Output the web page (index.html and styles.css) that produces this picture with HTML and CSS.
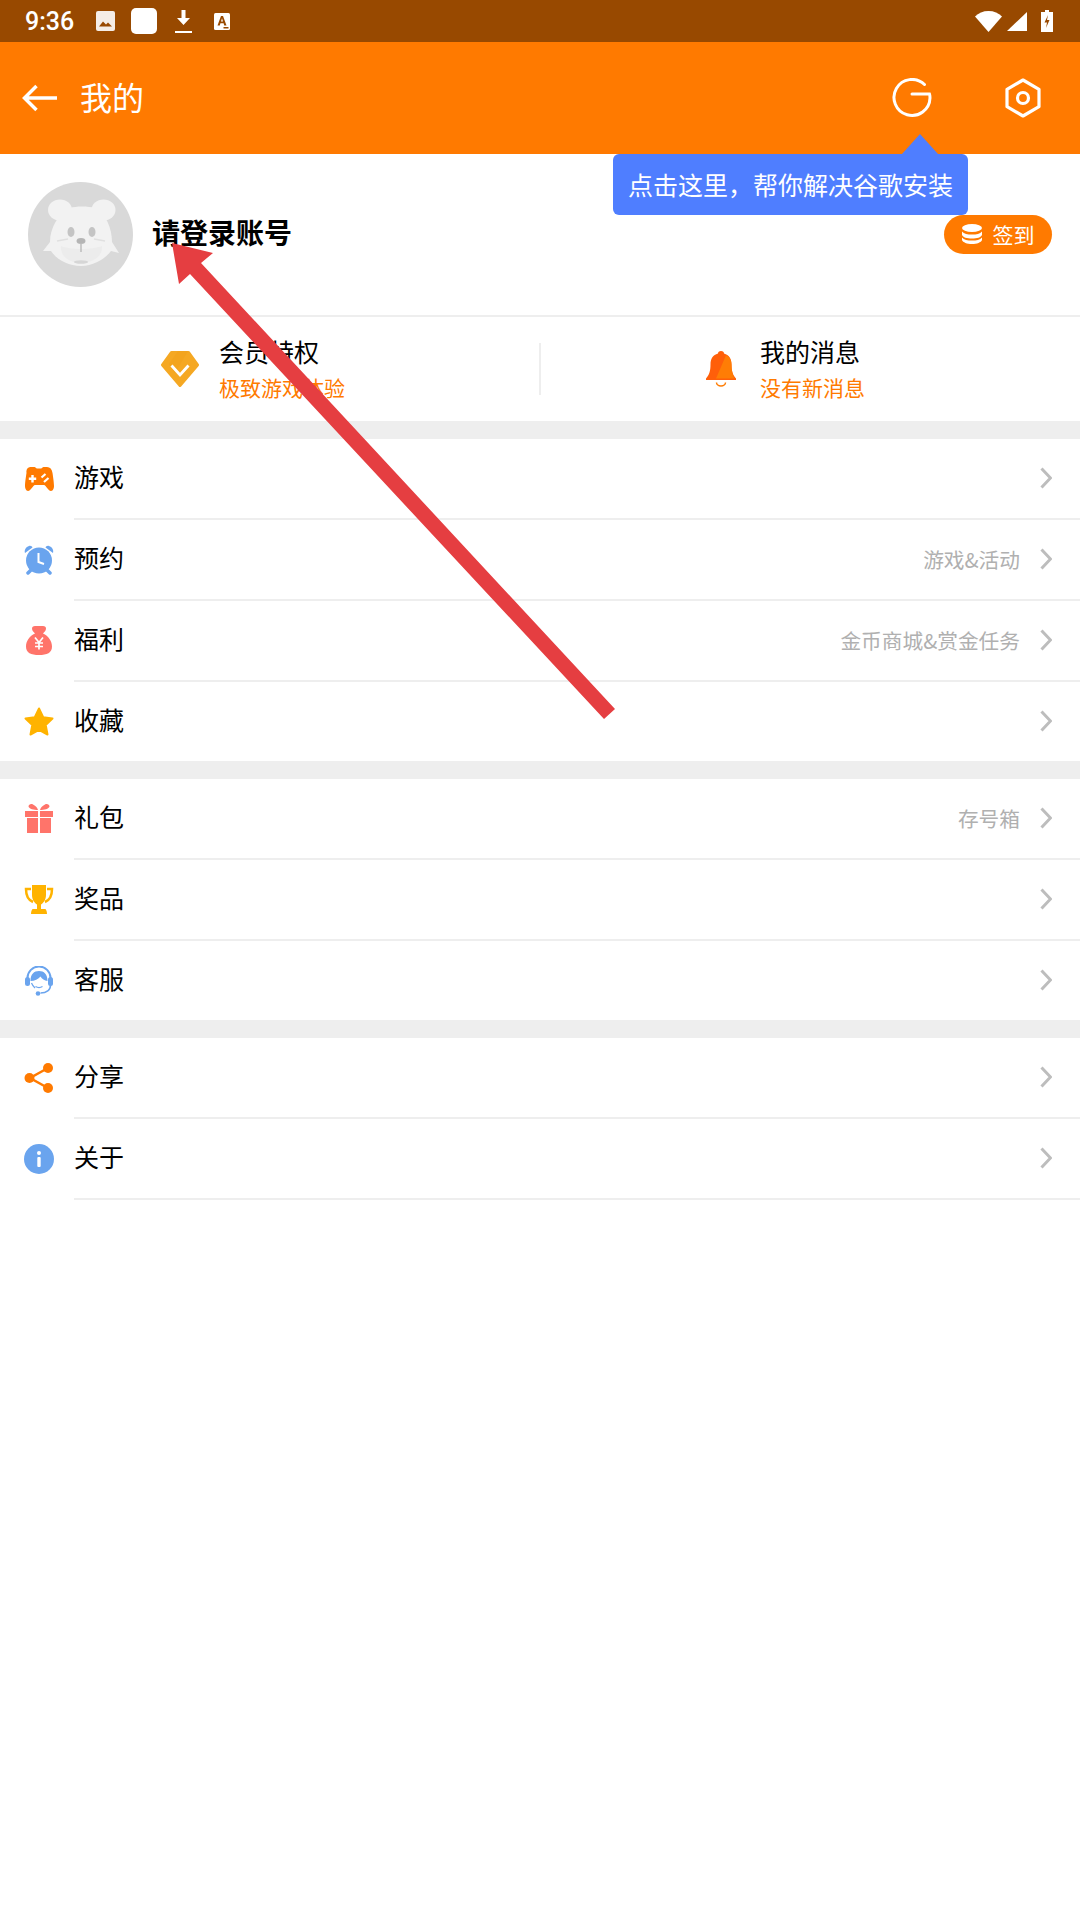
FILE: index.html

```html
<!DOCTYPE html>
<html lang="zh-CN">
<head>
  <meta charset="UTF-8" />
  <meta name="viewport" content="width=device-width, initial-scale=1.0" />
  <title>我的</title>
  <link rel="stylesheet" href="styles.css">
</head>
<body>
  <div class="status-bar">
    <span class="clock">9:36</span>
    <svg class="st-pic" width="19" height="20" viewBox="0 0 19 20"><rect width="19" height="20" rx="2" fill="#fff" opacity=".9"/><path d="M3 15.500l4-5 3 3 2-2 4 4z" fill="#984900"/></svg>
    <span class="st-app"></span>
    <svg class="st-down" width="17" height="23" viewBox="0 0 17 23"><path d="M6.500 0h4v8h4.500l-6.500 7-6.500-7h4.500z" fill="#fff"/><rect y="21" width="17" height="2" fill="#fff"/></svg>
    <svg class="st-a" width="16" height="17" viewBox="0 0 16 17"><rect width="16" height="17" rx="1.500" fill="#fff"/><path d="M3.500 12.500L7 3h2l3.500 9.500h-2.300l-.6-2.200H6.400l-.6 2.200zM7 8.600h2L8 5.300z" fill="#984900"/><rect x="9.500" y="14" width="5" height="1.500" fill="#984900"/></svg>
    <span class="st-space"></span>
    <svg class="st-wifi" width="27" height="21" viewBox="0 0 27 21"><path d="M0 5.500C3.500 2 8 0 13.500 0S23.500 2 27 5.500L13.500 21z" fill="#fff"/></svg>
    <svg class="st-signal" width="20" height="19" viewBox="0 0 20 19"><path d="M20 0v19H0z" fill="#fff"/></svg>
    <svg class="st-batt" width="12" height="22" viewBox="0 0 12 22"><path d="M4 0h4v2h4v20H0V2h4z" fill="#fff"/><path d="M7 5L3.500 12.500h2.500L5 18l3.500-8H6z" fill="#984900"/></svg>
  </div>

  <header class="app-bar">
    <svg class="back" width="35" height="28" viewBox="0 0 35 28"><path d="M14.500 2L2.500 14l12 12M2.500 14h32.500" fill="none" stroke="#fff" stroke-width="3.500"/></svg>
    <span class="app-title">我的</span>
    <svg class="icon-g" width="40" height="40" viewBox="0 0 40 40"><path d="M32.500 6.500A18 18 0 1 0 38 20c0-1.500 0-2.800-.5-4H20" fill="none" stroke="#fff" stroke-width="3" stroke-linecap="round"/></svg>
    <svg class="icon-hex" width="36" height="40" viewBox="0 0 36 40"><path d="M18 2l16 9.300v17.400L18 38 2 28.700V11.300z" fill="none" stroke="#fff" stroke-width="3.200" stroke-linejoin="round"/><circle cx="18" cy="20" r="5.500" fill="none" stroke="#fff" stroke-width="3.200"/></svg>
  </header>

  <section class="profile">
    <svg class="avatar" width="105" height="105" viewBox="0 0 105 105">
      <circle cx="52.500" cy="52.500" r="52.500" fill="#d9d9d9"/>
      <ellipse cx="32" cy="28" rx="12" ry="10.500" fill="#f2f2f2"/>
      <ellipse cx="75.500" cy="28" rx="12" ry="10.500" fill="#f2f2f2"/>
      <path d="M42 26c6-2 18-2 25 0 11 6 17 20 17 34l7 11-8-2c-5 7-17 15-30 15s-25-7-30-15l-8 0 7-9c0-14 8-28 20-34z" fill="#f2f2f2"/>
      <path d="M33 64c9 4 31 4 41 0 1 10-9 17-21 17S32 74 33 64z" fill="#ececec"/>
      <ellipse cx="43" cy="50" rx="3.500" ry="5" fill="#c4c4c4"/>
      <ellipse cx="64" cy="50" rx="3.500" ry="5" fill="#c4c4c4"/>
      <path d="M29 59l11-2M66 57l11 2" stroke="#e0e0e0" stroke-width="1.500"/>
      <ellipse cx="53" cy="59" rx="4.500" ry="3" fill="#b5b5b5"/>
      <path d="M53 61v9" stroke="#bdbdbd" stroke-width="1.500"/>
      <ellipse cx="53" cy="80" rx="7" ry="1.800" fill="#d6d6d6"/>
    </svg>
    <span class="login">请登录账号</span>
    <span class="checkin">
      <svg width="20" height="20" viewBox="0 0 20 20"><ellipse cx="10" cy="4" rx="10" ry="4" fill="#fff"/><path d="M0 7.500c2 2.500 5.500 3 10 3s8-.5 10-3V11c-1 2.500-5 3.500-10 3.500S1 13.500 0 11z" fill="#fff"/><path d="M0 13.500c2 2.500 5.500 3 10 3s8-.5 10-3V16c-1 2.500-5 4-10 4s-9-1.500-10-4z" fill="#fff"/></svg>
      签到
    </span>
    <div class="tip"><span class="tip-text">点击这里，帮你解决谷歌安装</span></div>
  </section>

  <section class="member">
    <div class="member-cell">
      <svg width="38" height="36" viewBox="0 0 38 36"><path d="M10.500 1.500h17l9 12.500L19 34.500 1.500 14z" fill="#f5a823" stroke="#f5a823" stroke-width="3" stroke-linejoin="round"/><path d="M17 0h10l-13 22-6-9z" fill="#f29f1a" opacity=".5"/><path d="M10.500 14.500l8.500 9.500 8.500-9.500" fill="none" stroke="#fff" stroke-width="2.800"/></svg>
      <div class="member-text"><div class="member-title">会员特权</div><div class="member-sub">极致游戏体验</div></div>
    </div>
    <div class="member-cell member-cell-right">
      <svg width="30" height="36" viewBox="0 0 30 36"><path d="M15 0c2 0 3 1 3 2.500 5 1.500 7.500 5 7.500 11 0 6 1 10 4.500 14v1.500H0V27.500c3.500-4 4.500-8 4.500-14 0-6 2.500-9.500 7.500-11C12 1 13 0 15 0z" fill="#ff5f0a"/><path d="M20 4.200c3.800 1.800 5.500 5 5.500 9.300 0 6 1 10 3 14L10 27.500z" fill="#ff7d05"/><path d="M10.500 31.500a4.500 3.500 0 0 0 9 0" fill="none" stroke="#ff7d05" stroke-width="1.500"/></svg>
      <div class="member-text"><div class="member-title">我的消息</div><div class="member-sub">没有新消息</div></div>
    </div>
  </section>

  <section class="group">
    <div class="row">
      <svg class="row-icon" width="30" height="30" viewBox="0 0 30 30"><path d="M7 3h3.500c1 0 1.500 1.500 2.500 1.500h4c1 0 1.500-1.500 2.500-1.500H23c3 0 5 2 5.500 6 .5 3 1.500 10 1.500 13 0 2-1 5-3 5-3 0-5-6-7-6h-9c-2 0-4 6-7 6-2 0-3-3-3-5 0-3 1-10 1.500-13C2 5 4 3 7 3z" fill="#ff7a00"/><path d="M8.500 11v7.500M4.800 14.800h7.400" stroke="#fff" stroke-width="2.400"/><path d="M17.500 13.500l4-3.500M20 18l4.500-4" stroke="#fff" stroke-width="2.200"/></svg>
      <div class="row-body"><span class="row-label">游戏</span><svg class="chev" width="12" height="22" viewBox="0 0 12 22"><path d="M1.500 1.500L10.500 11l-9 9.500" fill="none" stroke="#bdbdbd" stroke-width="3"/></svg></div>
    </div>
    <div class="row">
      <svg class="row-icon" width="30" height="30" viewBox="0 0 30 30"><circle cx="15" cy="15.500" r="13" fill="#6aa4ee"/><path d="M1 8c-1-3 1-6 4-7 2-.5 3 .5 3.500 1.500zM29 8c1-3-1-6-4-7-2-.5-3 .5-3.500 1.500z" fill="#6aa4ee"/><path d="M7 25l-3 3M23 25l3 3" stroke="#6aa4ee" stroke-width="3.500" stroke-linecap="round"/><path d="M14.500 8v9l5.500 2" fill="none" stroke="#fff" stroke-width="2"/></svg>
      <div class="row-body"><span class="row-label">预约</span><span class="row-note">游戏&amp;活动</span><svg class="chev" width="12" height="22" viewBox="0 0 12 22"><path d="M1.500 1.500L10.500 11l-9 9.500" fill="none" stroke="#bdbdbd" stroke-width="3"/></svg></div>
    </div>
    <div class="row">
      <svg class="row-icon" width="30" height="30" viewBox="0 0 30 30"><path d="M11 0h8c2 0 3 1 3 2.500 0 2-1.500 3.500-3 5C24.500 10 28 15 28 20.500 28 27 23 29 15 29S2 27 2 20.500C2 15 5.500 10 11 7.500c-1.500-1.500-3-3-3-5C8 1 9 0 11 0z" fill="#ff746a"/><path d="M11 11.500l4 5 4-5M15 16.500v7M11 17h8M11 20.500h8" fill="none" stroke="#fff" stroke-width="1.700"/></svg>
      <div class="row-body"><span class="row-label">福利</span><span class="row-note">金币商城&amp;赏金任务</span><svg class="chev" width="12" height="22" viewBox="0 0 12 22"><path d="M1.500 1.500L10.500 11l-9 9.500" fill="none" stroke="#bdbdbd" stroke-width="3"/></svg></div>
    </div>
    <div class="row row-last">
      <svg class="row-icon" width="30" height="30" viewBox="0 0 30 30"><path d="M15 1.500l4.200 8.800 9.300 1.200-6.800 6.500 1.800 9.500-8.500-4.700-8.500 4.700 1.800-9.500-6.800-6.500 9.300-1.200z" fill="#ffb300" stroke="#ffb300" stroke-width="2" stroke-linejoin="round"/></svg>
      <div class="row-body"><span class="row-label">收藏</span><svg class="chev" width="12" height="22" viewBox="0 0 12 22"><path d="M1.500 1.500L10.500 11l-9 9.500" fill="none" stroke="#bdbdbd" stroke-width="3"/></svg></div>
    </div>
  </section>

  <section class="group">
    <div class="row">
      <svg class="row-icon" width="30" height="30" viewBox="0 0 30 30"><path d="M14 6C10 6 5 5 4.500 2.500 4.500.5 7-.5 9 .5c3 1.500 4.500 3.500 5 5.500zM16 6c4 0 9-1 9.500-3.500 0-2-2.500-3-4.500-2-3 1.500-4.500 3.500-5 5.500z" fill="#ff746a"/><rect x="1" y="7" width="13" height="6" fill="#ff746a"/><rect x="16" y="7" width="13" height="6" fill="#ff746a"/><rect x="3" y="14" width="11" height="15" fill="#ff746a"/><rect x="16" y="14" width="11" height="15" fill="#ff746a"/></svg>
      <div class="row-body"><span class="row-label">礼包</span><span class="row-note">存号箱</span><svg class="chev" width="12" height="22" viewBox="0 0 12 22"><path d="M1.500 1.500L10.500 11l-9 9.500" fill="none" stroke="#bdbdbd" stroke-width="3"/></svg></div>
    </div>
    <div class="row">
      <svg class="row-icon" width="30" height="30" viewBox="0 0 30 30"><path d="M8 0h14v10c0 5-3 8.500-5 9.500V24h4c1 0 2 2 2 5H7c0-3 1-5 2-5h4v-4.500C11 18.500 8 15 8 10z" fill="#ffb300"/><path d="M7 4H2c0 7 2 11 7 13M23 4h5c0 7-2 11-7 13" fill="none" stroke="#ffb300" stroke-width="2.500"/></svg>
      <div class="row-body"><span class="row-label">奖品</span><svg class="chev" width="12" height="22" viewBox="0 0 12 22"><path d="M1.500 1.500L10.500 11l-9 9.500" fill="none" stroke="#bdbdbd" stroke-width="3"/></svg></div>
    </div>
    <div class="row row-last">
      <svg class="row-icon" width="30" height="30" viewBox="0 0 30 30"><path d="M3.500 12a11.500 11.500 0 0 1 23 0" fill="none" stroke="#6aa4ee" stroke-width="2"/><path d="M6.500 15C6.500 8 10 5 15 5s8.500 3 8.500 10c-3-.5-5.500-2-7-4.500-2 2.500-6 4.500-10 4.500z" fill="#6aa4ee"/><rect x="1" y="11" width="5" height="9" rx="2.500" fill="#6aa4ee"/><rect x="24" y="11" width="5" height="9" rx="2.500" fill="#6aa4ee"/><path d="M26.500 19c0 5-4 8-10 8" fill="none" stroke="#6aa4ee" stroke-width="1.600"/><circle cx="14" cy="27.500" r="2.300" fill="#6aa4ee"/><path d="M11.500 20.500c2 1.200 5 1.200 7 0M7.500 17c.8 2 2 3.500 3.500 5" fill="none" stroke="#6aa4ee" stroke-width="1.200"/></svg>
      <div class="row-body"><span class="row-label">客服</span><svg class="chev" width="12" height="22" viewBox="0 0 12 22"><path d="M1.500 1.500L10.500 11l-9 9.500" fill="none" stroke="#bdbdbd" stroke-width="3"/></svg></div>
    </div>
  </section>

  <section class="group">
    <div class="row">
      <svg class="row-icon" width="30" height="30" viewBox="0 0 30 30"><path d="M24 5L6 15l18 10" fill="none" stroke="#ff7a00" stroke-width="2.500"/><circle cx="24" cy="5" r="5" fill="#ff7a00"/><circle cx="5.500" cy="15" r="5" fill="#ff7a00"/><circle cx="24" cy="25" r="5" fill="#ff7a00"/></svg>
      <div class="row-body"><span class="row-label">分享</span><svg class="chev" width="12" height="22" viewBox="0 0 12 22"><path d="M1.500 1.500L10.500 11l-9 9.500" fill="none" stroke="#bdbdbd" stroke-width="3"/></svg></div>
    </div>
    <div class="row">
      <svg class="row-icon" width="30" height="30" viewBox="0 0 30 30"><circle cx="15" cy="15" r="15" fill="#6aa4ee"/><circle cx="15" cy="9" r="2" fill="#fff"/><rect x="13.300" y="13" width="3.400" height="10" rx="1" fill="#fff"/></svg>
      <div class="row-body"><span class="row-label">关于</span><svg class="chev" width="12" height="22" viewBox="0 0 12 22"><path d="M1.500 1.500L10.500 11l-9 9.500" fill="none" stroke="#bdbdbd" stroke-width="3"/></svg></div>
    </div>
  </section>

  <svg class="annot" width="1080" height="1920" viewBox="0 0 1080 1920"><polygon points="172,243 213,253 201,263 615,709 604,719 190,274 179,284" fill="#e53e41"/></svg>
</body>
</html>
```

FILE: styles.css

```css
body {
  margin: 0;
  background: #fff;
  color: #000;
  font-family: "Noto Sans CJK SC", "Noto Sans", sans-serif;
  height: 1920px;
  position: relative;
  overflow: hidden;
}
svg {
  display: block;
  flex: none;
}

/* status bar */
.status-bar {
  height: 42px;
  background: #984900;
  display: flex;
  align-items: center;
  color: #fff;
  padding-left: 25px;
  padding-right: 27px;
}
.clock {
  font-family: Roboto, sans-serif;
  font-size: 25px;
  font-weight: 500;
  width: 71px;
}
.st-app {
  width: 26px;
  height: 26px;
  border-radius: 5px;
  background: #fff;
  margin-left: 16px;
}
.st-down {
  margin-left: 18px;
}
.st-a {
  margin-left: 22px;
}
.st-space {
  flex: 1;
}
.st-signal {
  margin-left: 5px;
}
.st-batt {
  margin-left: 14px;
}

/* app bar */
.app-bar {
  height: 112px;
  background: #ff7a00;
  display: flex;
  align-items: center;
  padding-left: 22px;
  padding-right: 39px;
  color: #fff;
}
.app-title {
  font-size: 32px;
  margin-left: 23px;
  margin-bottom: 4px;
  flex: 1;
}
.icon-hex {
  margin-left: 73px;
}

/* profile */
.profile {
  height: 161px;
  border-bottom: 2px solid #eee;
  display: flex;
  align-items: center;
  padding: 0 28px;
  position: relative;
}
.login {
  font-size: 28px;
  font-weight: 700;
  margin-left: 19px;
  margin-bottom: 5px;
  flex: 1;
}
.checkin {
  height: 39px;
  width: 108px;
  box-sizing: border-box;
  padding-bottom: 2px;
  border-radius: 20px;
  background: #ff7a00;
  color: #fff;
  font-size: 21px;
  display: flex;
  align-items: center;
  justify-content: center;
  gap: 11px;
}
.tip {
  position: absolute;
  left: 613px;
  top: 0;
  width: 355px;
  height: 61px;
  box-sizing: border-box;
  padding-bottom: 2px;
  background: #4f7eff;
  border-radius: 6px;
  color: #fff;
  font-size: 25px;
  display: flex;
  align-items: center;
  justify-content: center;
}
.tip::before {
  content: "";
  position: absolute;
  left: 289px;
  top: -20px;
  border-left: 18px solid transparent;
  border-right: 18px solid transparent;
  border-bottom: 20px solid #4f7eff;
}

/* member strip */
.member {
  height: 104px;
  display: flex;
  align-items: center;
}
.member-cell {
  flex: 0 0 539px;
  height: 52px;
  display: flex;
  align-items: center;
  padding-left: 161px;
  box-sizing: border-box;
  gap: 20px;
}
.member-cell-right {
  flex: 1;
  border-left: 2px solid #eee;
  padding-left: 165px;
  gap: 24px;
}
.member-title {
  font-size: 25px;
  line-height: 36px;
}
.member-sub {
  font-size: 21px;
  line-height: 36px;
  color: #ff7a00;
}

/* list */
.group {
  border-top: 18px solid #eee;
}
.row {
  display: flex;
  align-items: center;
  padding-left: 24px;
}
.row-icon {
  margin-right: 20px;
  margin-bottom: 2px;
}
.row-last .row-icon {
  margin-bottom: 0;
}
.row-body {
  flex: 1;
  height: 79px;
  border-bottom: 2px solid #eee;
  display: flex;
  align-items: center;
  padding-right: 28px;
}
.row-last .row-body {
  border-bottom: none;
}
.row-label {
  font-size: 25px;
  margin-bottom: 5px;
  flex: 1;
}
.row-note {
  font-size: 20.7px;
  color: #b0b0b0;
  margin-right: 20px;
  margin-bottom: 1px;
}
.chev {
  margin-bottom: 2px;
}
.annot {
  position: absolute;
  left: 0;
  top: 0;
  pointer-events: none;
}
```
